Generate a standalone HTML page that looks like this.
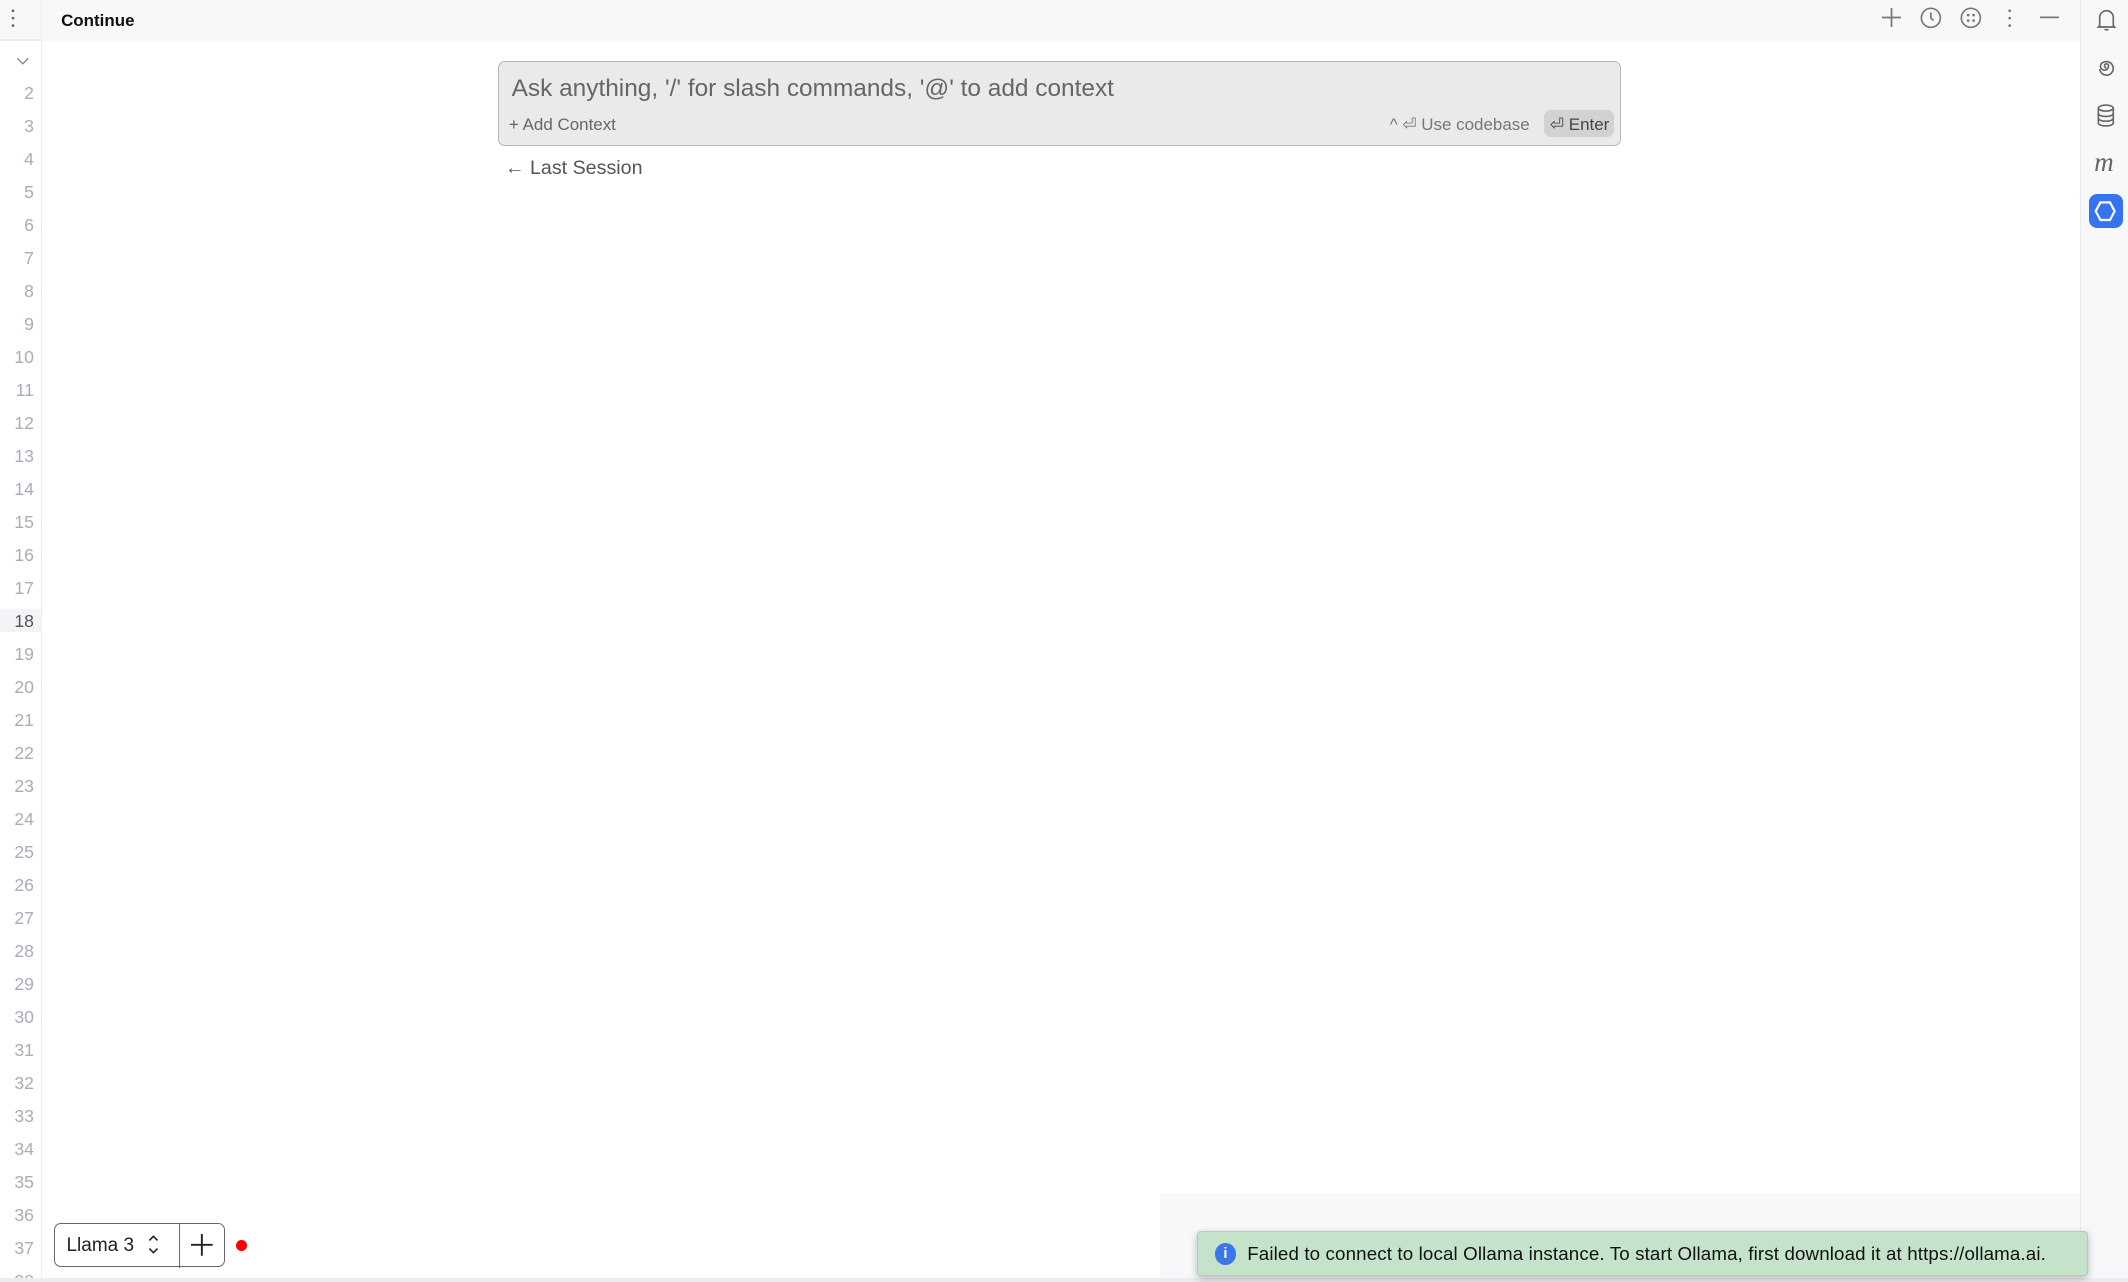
<!DOCTYPE html>
<html><head><meta charset="utf-8"><style>
html,body{margin:0;padding:0;overflow:hidden;background:#fff}
#r{position:relative;width:1568px;height:945px;zoom:1.35714;font-family:"Liberation Sans",sans-serif;overflow:hidden}
.a{position:absolute}
.ln{position:absolute;left:0;width:25px;text-align:right;font-size:13px;color:#a8adb8;line-height:16px}
svg{position:absolute;overflow:visible}
</style></head><body><div id="r">
<div class="a" style="left:0;top:0;width:1533px;height:30px;background:#f7f8fa"></div>
<div class="a" style="left:30px;top:0;width:1px;height:945px;background:#ebecf0"></div>
<div class="a" style="left:0;top:29px;width:30px;height:1px;background:#ebecf0"></div>
<svg style="left:8px;top:6px" width="4" height="16"><circle cx="1.5" cy="2" r="1" fill="#666"/><circle cx="1.5" cy="7.5" r="1" fill="#666"/><circle cx="1.5" cy="13" r="1" fill="#666"/></svg>
<div class="a" style="left:45px;top:8px;font-size:12.5px;font-weight:bold;color:#111">Continue</div>
<svg style="left:1387px;top:6px" width="14" height="14"><path d="M7 0V14M0 7H14" stroke="#777" stroke-width="1.3"/></svg>
<svg style="left:1415px;top:5px" width="16" height="16"><circle cx="8" cy="8" r="7" fill="none" stroke="#777" stroke-width="1.2"/><path d="M8 4V8L10 10" fill="none" stroke="#777" stroke-width="1.2"/></svg>
<svg style="left:1444px;top:5px" width="16" height="16"><circle cx="8" cy="8" r="7" fill="none" stroke="#777" stroke-width="1.2"/><circle cx="6" cy="6" r="1" fill="#777"/><circle cx="10" cy="6" r="1" fill="#777"/><circle cx="6" cy="10" r="1" fill="#777"/><circle cx="10" cy="10" r="1" fill="#777"/></svg>
<svg style="left:1479px;top:6px" width="4" height="16"><circle cx="2" cy="2" r="1" fill="#777"/><circle cx="2" cy="7.5" r="1" fill="#777"/><circle cx="2" cy="13" r="1" fill="#777"/></svg>
<svg style="left:1503px;top:12px" width="14" height="2"><path d="M0 1H14" stroke="#777" stroke-width="1.3"/></svg>
<div class="a" style="left:1533px;top:0;width:35px;height:945px;background:#f7f8fa;border-left:1px solid #ebecf0"></div>
<svg style="left:1545px;top:6px" width="14" height="18"><path d="M2 13V7A5 5 0 0 1 12 7V13L13 14H1Z" fill="none" stroke="#666" stroke-width="1.2"/><path d="M5.5 16H8.5" stroke="#666" stroke-width="1.2"/></svg>
<svg style="left:1545px;top:42px" width="14" height="14"><path d="M7 8A1.5 1.5 0 1 1 8.5 6.5 3 3 0 1 1 5 3.8 5 5 0 1 1 2 9" fill="none" stroke="#666" stroke-width="1.2"/></svg>
<svg style="left:1545px;top:77px" width="13" height="17"><ellipse cx="6.5" cy="3" rx="5.5" ry="2.2" fill="none" stroke="#666" stroke-width="1.2"/><path d="M1 3V14A5.5 2.2 0 0 0 12 14V3M1 7A5.5 2.2 0 0 0 12 7M1 10.5A5.5 2.2 0 0 0 12 10.5" fill="none" stroke="#666" stroke-width="1.2"/></svg>
<div class="a" style="left:1543px;top:108px;font-size:20px;font-style:italic;color:#666;font-family:'Liberation Serif',serif">m</div>
<div class="a" style="left:1539px;top:143px;width:25px;height:25px;background:#3574f0;border-radius:6px"></div>
<svg style="left:1544px;top:148px" width="15" height="15"><path d="M4 1H11L14.5 7.5L11 14H4L0.5 7.5Z" fill="none" stroke="#fff" stroke-width="1.6"/></svg>
<svg style="left:12px;top:42px" width="10" height="6"><path d="M1 1L5 5L9 1" fill="none" stroke="#888" stroke-width="1"/></svg>
<div class="a" style="left:0;top:449px;width:30px;height:17px;background:#f3f4f7"></div>
<div id="lns"></div>
<div class="a" style="left:367px;top:45px;width:826px;height:61px;background:#eaeaea;border:1px solid #b8b8b8;border-radius:5px"></div>
<div class="a" style="left:377px;top:55px;font-size:18px;color:#666">Ask anything, '/' for slash commands, '@' to add context</div>
<div class="a" style="left:375px;top:85px;font-size:12.5px;color:#666">+ Add Context</div>
<div class="a" style="left:1024px;top:84px;font-size:12.5px;color:#777">^ ⏎ Use codebase</div>
<div class="a" style="left:1138px;top:81px;width:51px;height:20px;background:#d2d2d2;border-radius:5px"></div>
<div class="a" style="left:1142px;top:84px;font-size:12.5px;color:#444">⏎ Enter</div>
<div class="a" style="left:372px;top:116px;font-size:14.5px;color:#555">← Last Session</div>
<div class="a" style="left:855px;top:880px;width:678px;height:65px;background:#f7f8fa"></div>
<div class="a" style="left:0;top:942px;width:1568px;height:3px;background:#ebecf0"></div>
<div class="a" style="left:882px;top:907px;width:655px;height:32px;background:#c5e3cb;border:1px solid #a8d3b0;border-radius:3px;box-shadow:0 2px 6px rgba(0,0,0,.25)"></div>
<div class="a" style="left:895px;top:916px;width:16px;height:16px;border-radius:50%;background:#3b78e7;color:#fff;font-size:11px;font-weight:bold;text-align:center;line-height:16px">i</div>
<div class="a" style="left:919px;top:916px;font-size:13.8px;color:#111;letter-spacing:0.1px">Failed to connect to local Ollama instance. To start Ollama, first download it at https://ollama.ai.</div>
<div class="a" style="left:40px;top:901px;width:124px;height:31px;border:1px solid #666;border-radius:5px;background:#fff"></div>
<div class="a" style="left:132px;top:901px;width:1px;height:33px;background:#666"></div>
<div class="a" style="left:49px;top:910px;font-size:14px;color:#222">Llama 3</div>
<svg style="left:109px;top:910px" width="8" height="15"><path d="M1 4L4 1L7 4M1 10L4 13L7 10" fill="none" stroke="#222" stroke-width="1.2"/></svg>
<svg style="left:141px;top:909px" width="16" height="16"><path d="M8 0V16M0 8H16" stroke="#222" stroke-width="1.4"/></svg>
<div class="a" style="left:174px;top:914px;width:8px;height:8px;border-radius:50%;background:#f00"></div>
</div>
<script>
var h='';for(var i=2;i<=38;i++){var y=68+(i-2)*24.33-7;h+='<div class="ln" style="top:'+y+'px;'+(i==18?'color:#555':'')+'">'+i+'</div>';}
document.getElementById('lns').outerHTML=h;
</script>
</body></html>
